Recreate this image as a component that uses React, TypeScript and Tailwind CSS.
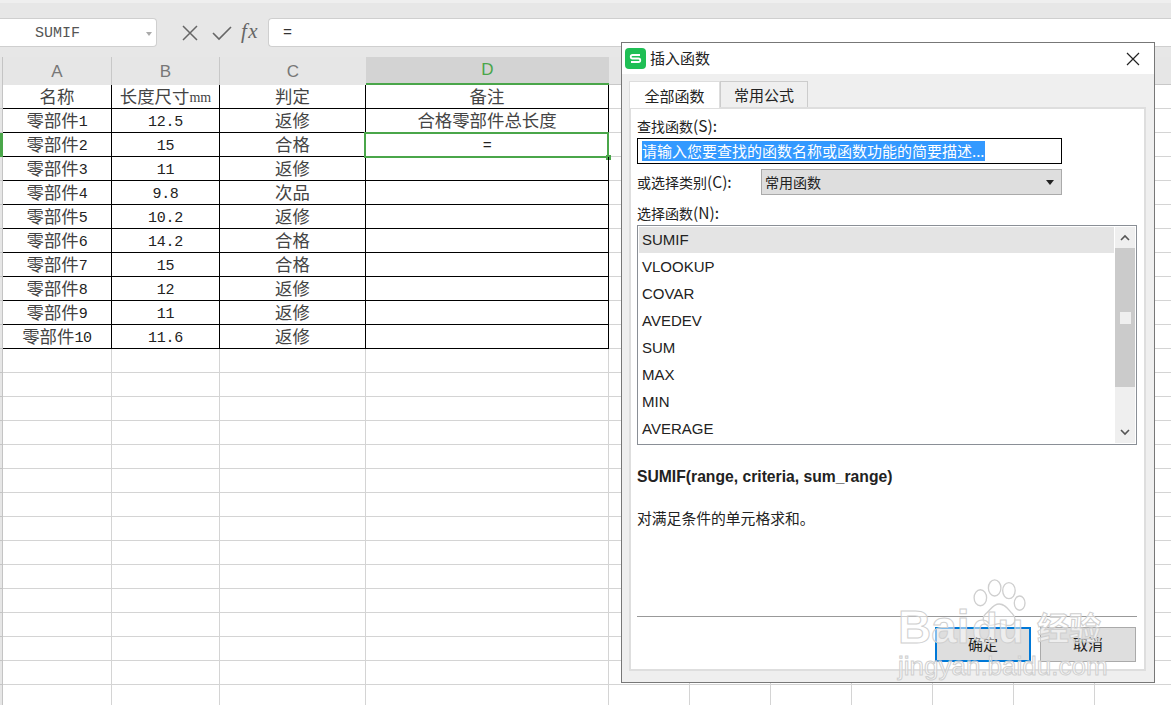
import React from 'react';

const cjk = '"Noto Sans CJK SC", sans-serif';

const rows = [
  ['名称', '长度尺寸', '判定', '备注'],
  ['零部件1', '12.5', '返修', '合格零部件总长度'],
  ['零部件2', '15', '合格', '='],
  ['零部件3', '11', '返修', ''],
  ['零部件4', '9.8', '次品', ''],
  ['零部件5', '10.2', '返修', ''],
  ['零部件6', '14.2', '合格', ''],
  ['零部件7', '15', '合格', ''],
  ['零部件8', '12', '返修', ''],
  ['零部件9', '11', '返修', ''],
  ['零部件10', '11.6', '返修', ''],
];

const funcs = ['SUMIF', 'VLOOKUP', 'COVAR', 'AVEDEV', 'SUM', 'MAX', 'MIN', 'AVERAGE'];

// half width latin inside the sheet's CJK text
const SheetText = ({ text }: { text: string }) => {
  const parts = text.split(/([0-9.=]+)/);
  return (
    <>
      {parts.map((p, i) =>
        /[0-9.=]/.test(p) ? (
          <span key={i} className="font-['Liberation_Mono'] text-[15px] tracking-[-0.3px] text-[#222] pt-[4px]">{p}</span>
        ) : (
          <span key={i} className="pb-[1px]">{p}</span>
        ),
      )}
    </>
  );
};

const ExtraCells = () => (
  <>
    <div className="w-[81px] h-full shrink-0 border-r border-[#d4d4d4]" />
    <div className="w-[81px] h-full shrink-0 border-r border-[#d4d4d4]" />
    <div className="w-[81px] h-full shrink-0 border-r border-[#d4d4d4]" />
    <div className="w-[81px] h-full shrink-0 border-r border-[#d4d4d4]" />
    <div className="w-[81px] h-full shrink-0 border-r border-[#d4d4d4]" />
    <div className="w-[81px] h-full shrink-0 border-r border-[#d4d4d4]" />
    <div className="w-[81px] h-full shrink-0 border-r border-[#d4d4d4]" />
  </>
);

const DataRow = ({ row, index }: { row: string[]; index: number }) => {
  const cell = 'h-full shrink-0 flex items-center justify-center border-r border-b border-black text-[17.4px] text-[#444] leading-none';
  return (
    <div className="flex h-[24px]">
      <div className={`w-[3px] h-full shrink-0 ${index === 2 ? 'bg-[#4aa64a]' : 'bg-[#e6e6e6] border-r border-b border-[#c4c4c4]'}`} />
      <div className={`${cell} w-[109px]`}><SheetText text={row[0]} /></div>
      <div className={`${cell} w-[108px]`}>
        <SheetText text={row[1]} />
        {index === 0 && <span className="font-['Liberation_Serif'] text-[14px] pt-[2px]">mm</span>}
      </div>
      <div className={`${cell} w-[146px]`}><SheetText text={row[2]} /></div>
      <div className={`${cell} w-[243px] relative`}>
        <SheetText text={row[3]} />
        {index === 2 && (
          <div className="absolute left-[-2px] top-[-1px] w-[245px] h-[26px] border-2 border-[#4aa64a]">
            <div className="absolute right-[-4px] bottom-[-4px] w-[5px] h-[5px] bg-[#4aa64a]" />
          </div>
        )}
      </div>
      <div className="flex border-b border-[#d4d4d4]"><ExtraCells /></div>
    </div>
  );
};

const EmptyRow = () => (
  <div className="flex h-[24px]">
    <div className="w-[3px] h-full shrink-0 bg-[#e6e6e6] border-r border-b border-[#c4c4c4]" />
    <div className="w-[109px] h-full shrink-0 border-r border-b border-[#d4d4d4]" />
    <div className="w-[108px] h-full shrink-0 border-r border-b border-[#d4d4d4]" />
    <div className="w-[146px] h-full shrink-0 border-r border-b border-[#d4d4d4]" />
    <div className="w-[243px] h-full shrink-0 border-r border-b border-[#d4d4d4]" />
    <div className="flex border-b border-[#d4d4d4]"><ExtraCells /></div>
  </div>
);

const Dialog = () => (
  <div className="absolute left-[621px] top-[42px] w-[534px] h-[641px] border border-[#777] bg-[#efefef] flex flex-col text-[14px] text-[#222]" style={{ fontFamily: cjk }}>
    {/* title bar */}
    <div className="h-[31px] bg-white flex items-center pl-[3px] pr-[14px] shrink-0">
      <svg width="21" height="21" viewBox="0 0 21 21">
        <rect width="21" height="21" rx="4" fill="#1fbf55" />
        <path d="M15 7H7.5a1.5 1.5 0 0 0 0 3.5h6a1.5 1.5 0 0 1 0 3.5H6" stroke="#fff" strokeWidth="1.8" fill="none" />
      </svg>
      <span className="ml-[4px] text-[15px] leading-none pb-[2px]">插入函数</span>
      <svg className="ml-auto" width="14" height="14" viewBox="0 0 14 14">
        <path d="M1 1l12 12M13 1L1 13" stroke="#222" strokeWidth="1.2" />
      </svg>
    </div>
    {/* tabs */}
    <div className="flex pl-[7px] h-[34px] items-end shrink-0 relative z-10 text-[15px]">
      <div className="w-[91px] h-[27px] pt-[2px] bg-white border border-b-0 border-[#ddd] flex items-center justify-center">全部函数</div>
      <div className="w-[88px] h-[26px] pt-[2px] mb-[1px] bg-[#efefef] border border-b-0 border-[#ccc] flex items-center justify-center">常用公式</div>
    </div>
    {/* panel */}
    <div className="mx-[7px] w-[517px] h-[564px] -mt-[1px] bg-white border-2 border-[#dedede] px-[6px] flex flex-col">
      <div className="h-[29px] pt-[6px] leading-[20px] shrink-0">查找函数<span className="text-[15.5px]">(S):</span></div>
      <div className="w-[425px] h-[26px] border border-black flex items-center pl-[4px] shrink-0">
        <span className="bg-[#3399ff] text-white h-[20px] leading-[19px] whitespace-nowrap text-[15px]">请输入您要查找的函数名称或函数功能的简要描述...</span>
      </div>
      <div className="flex items-center h-[26px] mt-[5px] shrink-0">
        <span className="w-[124px]">或选择类别<span className="text-[15.5px]">(C):</span></span>
        <div className="w-[301px] h-[26px] bg-[#dedede] border border-[#aaa] flex items-center pl-[3px] pr-[7px]">
          <span>常用函数</span>
          <svg className="ml-auto" width="8" height="5" viewBox="0 0 8 5"><path d="M0 0h8L4 5z" fill="#222" /></svg>
        </div>
      </div>
      <div className="h-[30px] leading-[35px] shrink-0">选择函数<span className="text-[15.5px]">(N):</span></div>
      <div className="w-[500px] h-[220px] border border-[#8a8f96] p-[1px] flex shrink-0 font-['Liberation_Sans'] text-[15px]">
        <div className="w-[475px] mr-[1px]">
          {funcs.map((f, i) => (
            <div key={f} className={`flex items-center pl-[3px] ${i === 0 ? 'bg-[#e4e4e4] h-[26px] mb-[1px]' : 'h-[27px] pb-[1px]'}`}>{f}</div>
          ))}
        </div>
        <div className="w-[20px] bg-[#efefef] flex flex-col items-center">
          <div className="h-[21px] flex items-center justify-center shrink-0">
            <svg width="10" height="7" viewBox="0 0 10 7"><path d="M1 6l4-4 4 4" stroke="#555" strokeWidth="1.6" fill="none" /></svg>
          </div>
          <div className="w-full h-[139px] bg-[#cbcbcb] flex items-center justify-center">
            <div className="w-[11px] h-[12px] bg-[#efefef]" />
          </div>
          <div className="mt-auto h-[22px] flex items-center justify-center">
            <svg width="10" height="7" viewBox="0 0 10 7"><path d="M1 1l4 4 4-4" stroke="#555" strokeWidth="1.6" fill="none" /></svg>
          </div>
        </div>
      </div>
      <div className="mt-[22px] h-[20px] leading-[20px] font-bold font-['Liberation_Sans'] text-[15.7px] shrink-0 whitespace-nowrap">SUMIF(range, criteria, sum_range)</div>
      <div className="mt-[21px] h-[20px] leading-[20px] text-[14.8px] shrink-0">对满足条件的单元格求和。</div>
      <div className="mt-[88px] w-[500px] border-t border-[#999] shrink-0" />
      <div className="flex justify-end gap-[9px] w-[499px] mt-[10px] shrink-0 text-[15px]">
        <div className="w-[96px] h-[35px] bg-[#dedede] border-2 border-[#0078d7] flex items-center justify-center">确定</div>
        <div className="w-[96px] h-[35px] bg-[#dedede] border border-[#aaa] flex items-center justify-center">取消</div>
      </div>
    </div>
  </div>
);

const Watermark = () => (
  <div className="absolute left-[896px] top-[578px] w-[212px] h-[105px] pointer-events-none">
    <svg className="absolute left-[72px] top-[1px]" width="64" height="50" viewBox="0 0 70 56">
      <g fill="#ffffff" fillOpacity="0.45" stroke="#cfcfcf" strokeWidth="1.5">
        <ellipse cx="13" cy="21" rx="7" ry="9" />
        <ellipse cx="29" cy="10" rx="7" ry="9" />
        <ellipse cx="45" cy="13" rx="7" ry="9" />
        <ellipse cx="57" cy="27" rx="6" ry="8" />
        <path d="M34 28c7 0 10 6 15 11 5 6 3 14-6 13-4-1-6-2-9-2s-6 2-10 2c-8 0-10-8-5-13 6-5 8-11 15-11z" />
      </g>
    </svg>
    <span className="absolute left-[2px] top-[26px] text-[46px] leading-none font-bold font-['Liberation_Sans'] text-white/50 [-webkit-text-stroke:1px_#cfcfcf]">Bai</span>
    <span className="absolute left-[76px] top-[30px] text-[42px] leading-none font-bold font-['Liberation_Sans'] text-white/50 [-webkit-text-stroke:1px_#cfcfcf]">du</span>
    <span className="absolute left-[141px] top-[32px] text-[32px] leading-none font-bold text-white/50 [-webkit-text-stroke:1px_#cfcfcf]" style={{ fontFamily: cjk }}>经验</span>
    <span className="absolute left-[2px] top-[75px] text-[26px] leading-none font-['Liberation_Sans'] text-white/50 [-webkit-text-stroke:1px_#cfcfcf] whitespace-nowrap">jingyan.baidu.com</span>
  </div>
);

export default function App() {
  return (
    <div className="relative w-[1171px] h-[705px] overflow-hidden bg-white" style={{ fontFamily: cjk }}>
      {/* formula bar */}
      <div className="h-[57px] bg-[#e7e7e7] border-t-[3px] border-[#efefef] pt-[15px] flex items-start">
        <div className="w-[157px] h-[29px] bg-white border border-l-0 border-[#cfcfcf] rounded-r-[4px] flex items-center relative shrink-0">
          <span className="ml-[35px] font-['Liberation_Mono'] text-[15px] text-[#555] pt-[3px]">SUMIF</span>
          <svg className="absolute right-[4px] top-[13px]" width="6" height="4" viewBox="0 0 6 4"><path d="M0 0h6L3 4z" fill="#aaa" /></svg>
        </div>
        <svg className="ml-[25px] mt-[7px] shrink-0" width="16" height="16" viewBox="0 0 16 16">
          <path d="M1 1l14 14M15 1L1 15" stroke="#666" strokeWidth="1.5" />
        </svg>
        <svg className="ml-[14px] mt-[7px] shrink-0" width="20" height="16" viewBox="0 0 20 16">
          <path d="M1 8l6 6L19 2" stroke="#666" strokeWidth="1.6" fill="none" />
        </svg>
        <span className="ml-[9px] mt-[1px] w-[20px] shrink-0 font-['Liberation_Serif'] italic text-[21px] tracking-[1.5px] leading-[24px] text-[#666]">fx</span>
        <div className="ml-[7px] flex-1 h-[29px] bg-white border border-r-0 border-[#cfcfcf] rounded-l-[4px] flex items-center pl-[14px] font-['Liberation_Mono'] text-[15px] text-[#333]"><span className="pt-[3px]">=</span></div>
      </div>
      {/* column headers */}
      <div className="flex h-[28px] bg-[#e6e6e6] font-['Liberation_Sans'] text-[17px] text-[#777]">
        <div className="w-[3px] shrink-0 border-r border-[#c4c4c4]" />
        <div className="w-[109px] pt-[2px] shrink-0 border-r border-[#c8c8c8] flex items-center justify-center">A</div>
        <div className="w-[108px] pt-[2px] shrink-0 border-r border-[#c8c8c8] flex items-center justify-center">B</div>
        <div className="w-[146px] pt-[2px] shrink-0 flex items-center justify-center">C</div>
        <div className="w-[243px] shrink-0 bg-[#d3d3d3] border-b-2 border-[#4aa64a] flex items-center justify-center text-[#4aa64a]">D</div>
        <div className="flex-1 border-b border-[#c8c8c8]" />
      </div>
      {/* sheet rows */}
      {rows.map((r, i) => <DataRow key={i} row={r} index={i} />)}
      {Array.from({ length: 15 }).map((_, i) => <EmptyRow key={i} />)}
      <Dialog />
      <Watermark />
    </div>
  );
}
